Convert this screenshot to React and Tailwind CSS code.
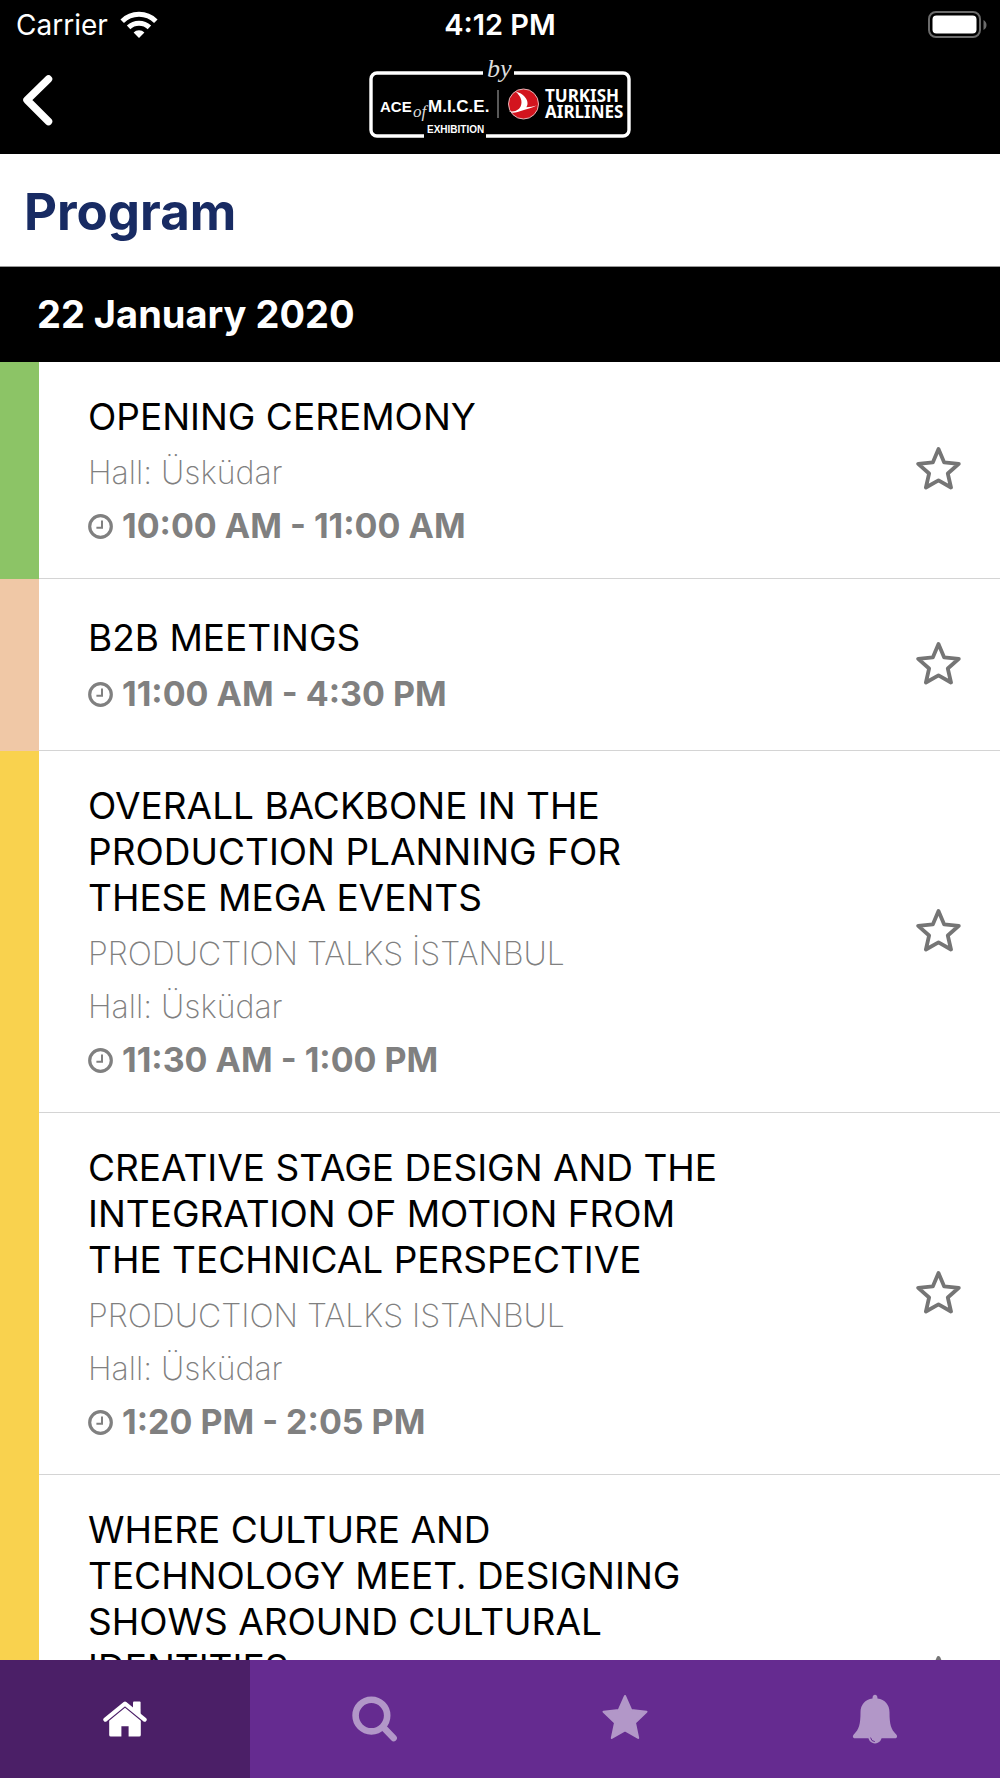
import React from 'react';

const sessions = [
  {
    id: 1,
    title: 'OPENING CEREMONY',
    hall: 'Hall: Üsküdar',
    time: '10:00 AM - 11:00 AM',
    stripe: 'bg-[#8cc466]',
  },
  {
    id: 2,
    title: 'B2B MEETINGS',
    time: '11:00 AM - 4:30 PM',
    stripe: 'bg-[#f0c8a6]',
  },
  {
    id: 3,
    title: 'OVERALL BACKBONE IN THE PRODUCTION PLANNING FOR THESE MEGA EVENTS',
    track: 'PRODUCTION TALKS İSTANBUL',
    hall: 'Hall: Üsküdar',
    time: '11:30 AM - 1:00 PM',
    stripe: 'bg-[#f9d24e]',
  },
  {
    id: 4,
    title: 'CREATIVE STAGE DESIGN AND THE INTEGRATION OF MOTION FROM THE TECHNICAL PERSPECTIVE',
    track: 'PRODUCTION TALKS ISTANBUL',
    hall: 'Hall: Üsküdar',
    time: '1:20 PM - 2:05 PM',
    stripe: 'bg-[#f9d24e]',
  },
  {
    id: 5,
    title: 'WHERE CULTURE AND TECHNOLOGY MEET. DESIGNING SHOWS AROUND CULTURAL IDENTITIES',
    track: 'PRODUCTION TALKS ISTANBUL',
    hall: 'Hall: Üsküdar',
    time: '2:15 PM - 3:00 PM',
    stripe: 'bg-[#f9d24e]',
  },
];

const WifiIcon = () => (
  <svg width="38" height="28" viewBox="0 0 38 28" fill="none" stroke="#fff" aria-hidden="true">
    <path d="M2.2 10.2a24 24 0 0 1 33.6 0" strokeWidth="5" />
    <path d="M8.6 16.4a15 15 0 0 1 20.8 0" strokeWidth="5" />
    <path d="M19 27l-5.4-5.4a7.6 7.6 0 0 1 10.8 0z" fill="#fff" stroke="none" />
  </svg>
);

const BatteryIcon = () => (
  <svg width="60" height="28" viewBox="0 0 60 28" aria-hidden="true">
    <rect x="1" y="1" width="51" height="25" rx="7" fill="none" stroke="#6b6b6b" strokeWidth="2" />
    <rect x="4.5" y="4.5" width="44" height="18" rx="4" fill="#fff" />
    <path d="M55.5 9c4 2 4 8 0 10z" fill="#6b6b6b" />
  </svg>
);

const ClockIcon = () => (
  <svg width="26" height="26" viewBox="0 0 26 26" fill="none" stroke="currentColor" aria-hidden="true">
    <circle cx="12.5" cy="13.5" r="10.8" strokeWidth="3.2" />
    <path d="M14 7.5v7.2H8.4" strokeWidth="2" />
  </svg>
);

const StarOutline = () => (
  <svg width="46" height="44" viewBox="0 0 46 44" fill="none" stroke="#757575" strokeWidth="3.8" strokeLinejoin="round" aria-hidden="true">
    <path d="M23.5 3l5.7 13.4 14.6 1.4-11 9.7 3.2 14-12.5-7.2-12.6 7.2 3.2-14L3.2 17.8l14.6-1.4z" />
  </svg>
);

const HomeIcon = () => (
  <svg width="44" height="36" viewBox="0 0 44 36" fill="#fff" aria-hidden="true">
    <path d="M2.4 18.6L22 2.6l19.6 16" fill="none" stroke="#fff" strokeWidth="4.2" strokeLinecap="round" strokeLinejoin="round" />
    <path d="M31 .6h5.6q1 0 1 1V14L30 8V1.6q0-1 1-1z" />
    <path d="M22 6.8l15.8 13V34q0 1.600-1.600 1.600H25.600V25.200h-7.200v10.400H7.800q-1.600 0-1.600-1.600V19.800z" />
  </svg>
);

const SearchIcon = () => (
  <svg width="46" height="46" viewBox="0 0 46 46" fill="none" stroke="currentColor" aria-hidden="true">
    <circle cx="19.4" cy="19.6" r="15.8" strokeWidth="6.6" />
    <path d="M31.5 31.5L41.6 42" strokeWidth="6.6" strokeLinecap="round" />
  </svg>
);

const StarIcon = () => (
  <svg width="46" height="50" viewBox="0 0 46 50" fill="currentColor" stroke="currentColor" strokeWidth="2" strokeLinejoin="round" aria-hidden="true">
    <path d="M23 2l6.2 14 15.3 1.7-11.5 11L36.2 44 23 36.4 9.8 44 13 28.7 1.5 17.7 16.8 16z" />
  </svg>
);

const BellIcon = () => (
  <svg width="46" height="50" viewBox="0 0 46 50" aria-hidden="true">
    <path
      fill="currentColor"
      d="M23 .8c1.6 0 2.5 1.2 2.5 3.8 7.5 1 12 6.4 12 13.6 0 12 1.5 17 6.5 22 2 2.3 1 4-1 4H3c-2 0-3-1.7-1-4 5-5 6.5-10 6.5-22 0-7.2 4.5-12.6 12-13.6C20.5 2 21.4.8 23 .8z"
    />
    <path fill="currentColor" d="M16.4 42h13.2c.6 4-2.6 7.4-6.6 7.4s-7.2-3.4-6.6-7.4z" />
    <path d="M18.6 43.6q.6 3.8 4.2 4" fill="none" stroke="#652b90" strokeWidth="1" />
  </svg>
);

const Logo = () => (
  <svg width="264" height="94" viewBox="0 0 264 94" role="img" aria-label="ACE of M.I.C.E. Exhibition by Turkish Airlines">
    <g fill="none" stroke="#fff" strokeWidth="3.4">
      <path d="M115 20H9a6 6 0 0 0-6 6v51a6 6 0 0 0 6 6h47" />
      <path d="M146 20h109a6 6 0 0 1 6 6v51a6 6 0 0 1-6 6H118" />
    </g>
    <g fill="#fff" className="font-['Liberation_Sans',sans-serif] font-bold">
      <text x="12" y="59" fontSize="15">ACE</text>
      <text x="60" y="59" fontSize="17">M.I.C.E.</text>
      <text x="59" y="80" fontSize="10">EXHIBITION</text>
    </g>
    <g fill="#ddd" className="font-['Liberation_Serif',serif] italic">
      <text x="45" y="64" fontSize="17">of</text>
      <text x="119" y="24" fontSize="26">by</text>
    </g>
    <path d="M130 37v28" stroke="#777" strokeWidth="1.5" />
    <circle cx="155.5" cy="51" r="15" fill="#d3141e" stroke="#e8b6b8" strokeWidth="1" />
    <path
      fill="#fff"
      d="M147.5 38.5c8 2 12.5 7.5 12 12.5-.2 1.5-.5 2.3-1.2 3.2 3.6-.2 7-.8 10.4-1.8-5.4 2.5-10.2 3.6-14.4 5.2-3.2 1.2-6 2.2-9.4 2.2-1.6 0-3-.4-3.8-1.2 6 .2 9.8-1.4 11.6-5.4 2-4.6.4-9.8-5.2-14.7z"
    />
    <g fill="#fff" className="font-['Noto_Sans',sans-serif] font-bold">
      <text x="177" y="49" fontSize="17">TURKISH</text>
      <text x="177" y="65" fontSize="17">AIRLINES</text>
    </g>
  </svg>
);

const SessionRow = ({ session }) => (
  <li className="flex min-h-[172px]">
    <div className={`w-[39px] shrink-0 ${session.stripe}`}></div>
    <div className="flex flex-1 items-center border-b border-[#d4d4d4]">
      <div className="flex-1 pt-8 pr-36 pb-[26px] pl-[49px]">
        <h3 className="text-[37px] leading-[46px] text-black">{session.title}</h3>
        <div className="mt-[6px] leading-[53px] text-[#808080]">
          {session.track && <p className="text-[32px] leading-[53px] font-extralight">{session.track}</p>}
          {session.hall && <p className="text-[32px] leading-[53px] font-extralight">{session.hall}</p>}
          <p className="flex items-center gap-2 text-[34px] leading-[53px] font-bold">
            <ClockIcon />
            {session.time}
          </p>
        </div>
      </div>
      <button type="button" aria-label={`Add ${session.title} to favorites`} className="flex w-[124px] shrink-0 justify-center pb-1">
        <StarOutline />
      </button>
    </div>
  </li>
);

const tabs = [
  { name: 'Home', icon: HomeIcon, active: true },
  { name: 'Search', icon: SearchIcon },
  { name: 'Favorites', icon: StarIcon },
  { name: 'Notifications', icon: BellIcon },
];

export default function App() {
  return (
    <div className="flex h-screen flex-col bg-white font-['Inter',sans-serif]">
      <header className="bg-black text-white">
        {/* Status bar */}
        <div className="grid h-[50px] grid-cols-3 items-center px-3 text-[28px] leading-8">
          <div className="flex items-center gap-3 pl-1">
            <span>Carrier</span>
            <WifiIcon />
          </div>
          <span className="text-center text-[29px] font-semibold">4:12 PM</span>
          <div className="flex justify-end">
            <BatteryIcon />
          </div>
        </div>

        <div className="grid h-[104px] grid-cols-[1fr_auto_1fr] items-center px-5 pb-1">
          <button type="button" aria-label="Back" className="justify-self-start">
            <svg width="36" height="52" viewBox="0 0 36 52" fill="none" stroke="#fff" strokeWidth="7.5" strokeLinecap="round" strokeLinejoin="round" aria-hidden="true">
              <path d="M28.5 5L7 26l21.5 21.5" />
            </svg>
          </button>
          <Logo />
        </div>
      </header>

      <h1 className="border-b border-[#999] px-6 pt-[26px] pb-[22px] text-[51px] leading-[64px] font-bold text-[#182b63]">Program</h1>
      <h2 className="bg-black px-[37px] py-6 text-[38px] leading-[47px] font-bold text-white">22 January 2020</h2>

      <ul className="min-h-0 flex-1 overflow-y-auto [scrollbar-width:none]">
        {sessions.map(session => (
          <SessionRow key={session.id} session={session} />
        ))}
      </ul>

      <nav className="grid h-[118px] shrink-0 grid-cols-4 bg-[#652b90] text-[#b297c8]">
        {tabs.map(tab => (
          <a
            key={tab.name}
            href="#"
            aria-label={tab.name}
            className={`flex items-center justify-center ${tab.active ? 'bg-[#4b1f67]' : ''}`}
          >
            <tab.icon />
          </a>
        ))}
      </nav>
    </div>
  );
}
